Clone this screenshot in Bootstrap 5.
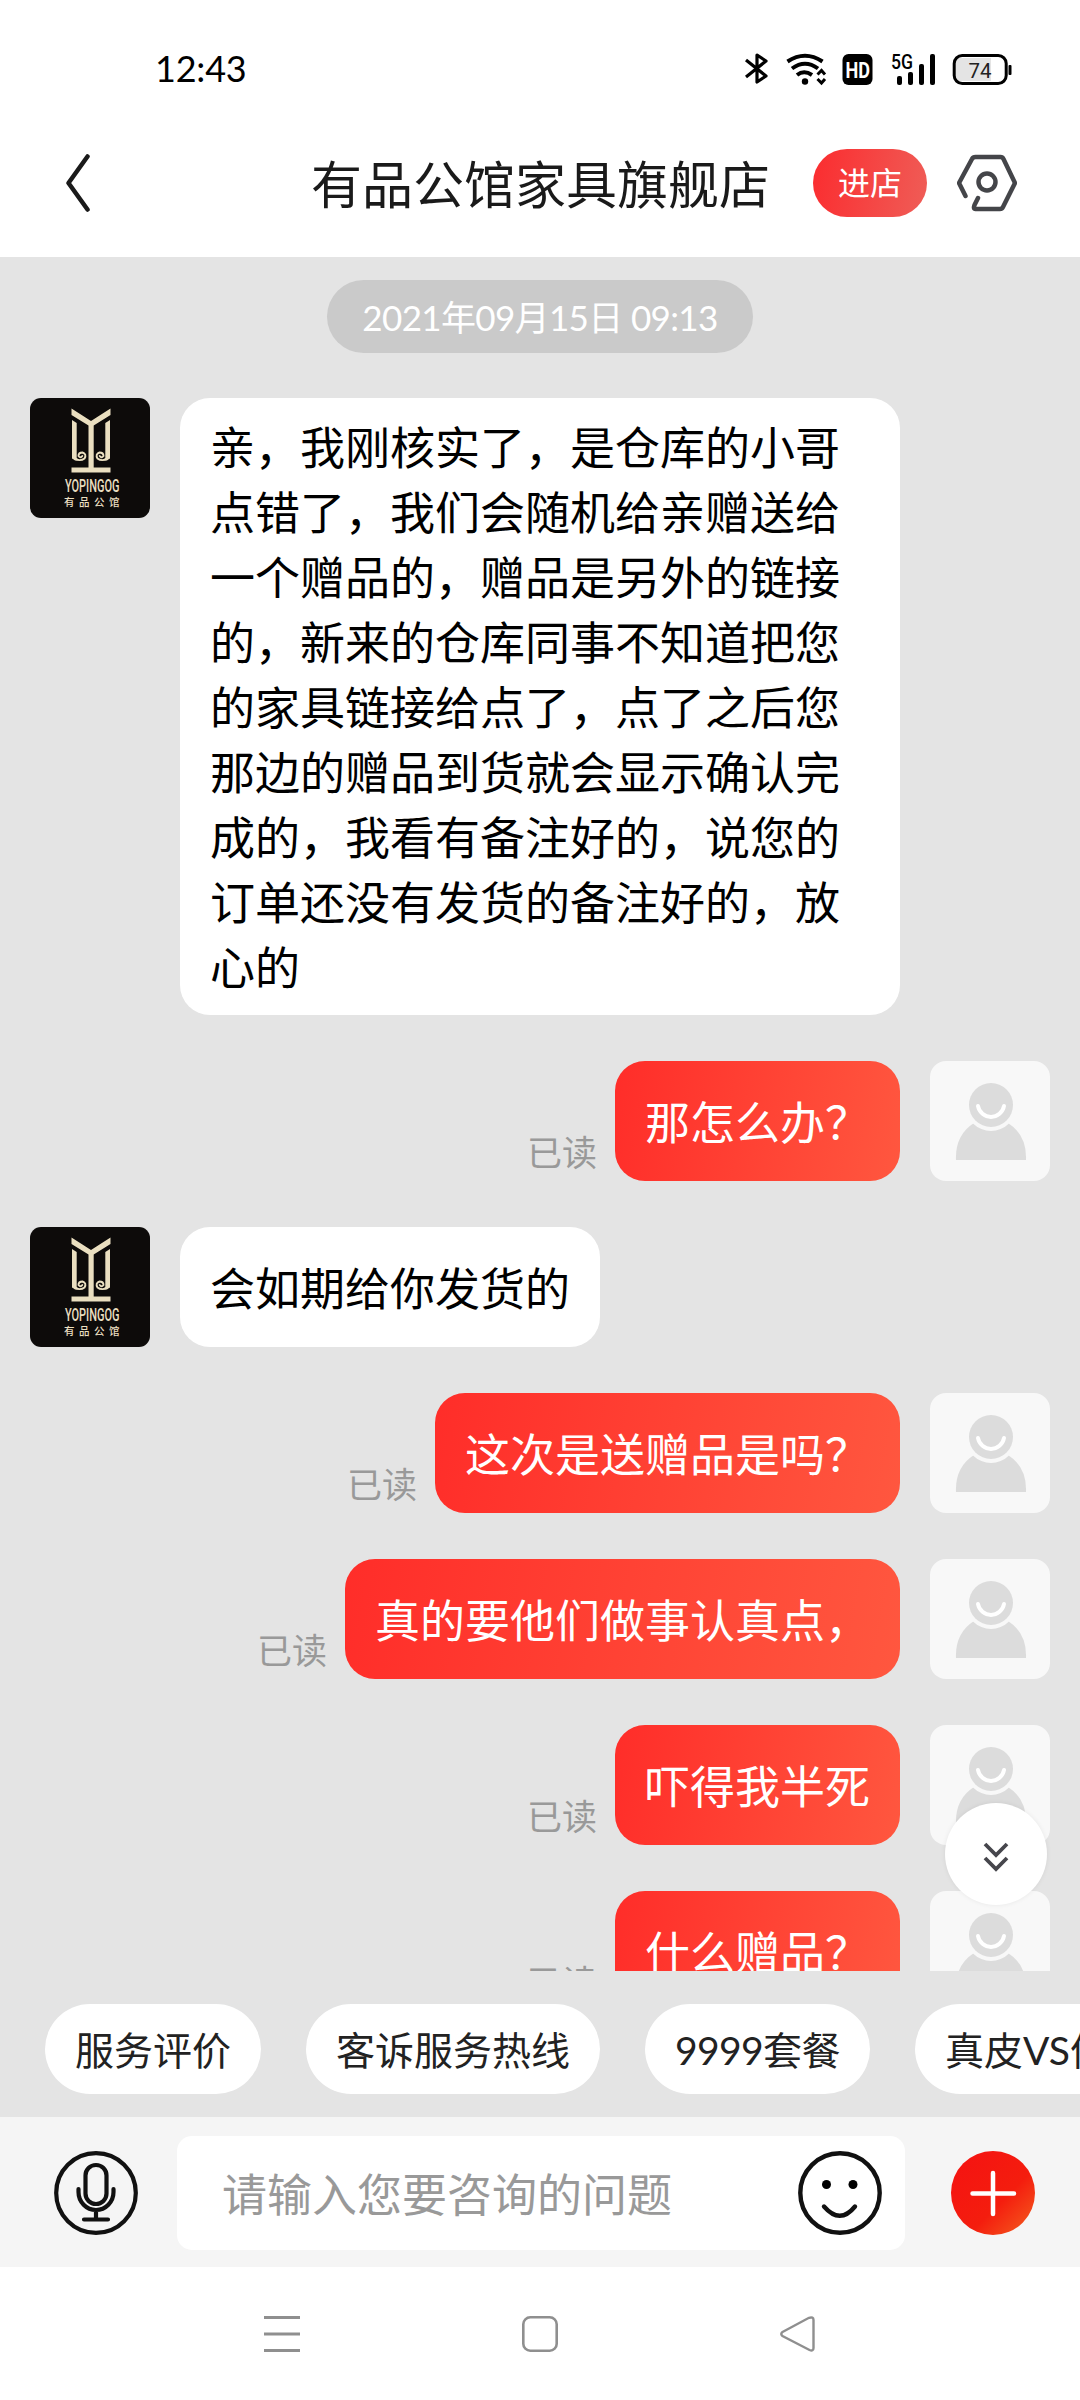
<!DOCTYPE html>
<html lang="zh-CN">
<head>
<meta charset="utf-8">
<meta name="viewport" content="width=device-width, initial-scale=1">
<title>有品公馆家具旗舰店</title>
<link href="https://cdn.jsdelivr.net/npm/bootstrap@5.3.0/dist/css/bootstrap.min.css" rel="stylesheet">
<style>
body{font-family:"Lato","Noto Sans CJK SC",sans-serif;color:#000;text-spacing-trim:space-all}
svg{display:block;flex:none}
.phone{width:1080px;height:2400px;overflow:hidden;background:#fff}
.statusbar{height:137px;padding:0 53px 0 155px}
.clock{font-size:36px;line-height:1;letter-spacing:-.2px;padding-bottom:2px}
.topbar{height:120px;padding:0 63px 28px 66px}
.shop-title{font-size:51px;line-height:68px;color:#1a1a1a;font-weight:400;margin:4px 0 0 219px}
.enter-btn{width:114px;height:68px;padding:0;border:0;margin:0 30px 0 auto;font-size:32px;line-height:68px;color:#fff;background:linear-gradient(100deg,#fb2c2f,#ef5d57)}
.chat{height:1714px;padding:23px 30px 0;background:#e4e4e4;gap:46px}
.date-pill{width:426px;height:73px;margin-bottom:-1px;font-size:35px;line-height:74px;letter-spacing:-.65px;color:#fff;background:#cacaca}
.avatar{width:120px;height:120px;border-radius:11px;overflow:hidden;flex:none}
.avatar-guest{border-radius:16px}
.msg-row{gap:30px}
.bubble{min-height:120px;max-width:720px;padding:18px 30px 14px;border-radius:30px;font-size:45px;line-height:65px}
.bubble-in{background:#fff}
.bubble-out{color:#fff;background:linear-gradient(100deg,#ff2d29,#ff573f)}
.read-flag{font-size:35px;line-height:40px;color:#999;margin:0 -12px 9px 0}
.jump-btn{width:102px;height:102px;right:33px;top:1546px;background:#fff;box-shadow:0 0 5px rgba(0,0,0,.07)}
.quick{height:146px;padding:33px 0 0 45px;gap:45px;background:#e4e4e4}
.chip{height:90px;padding:0 30px;font-size:39px;line-height:92px;color:#222;background:#fff;border-radius:45px;flex:none;white-space:nowrap}
.chip-num{letter-spacing:-.6px}
.inputbar{height:150px;padding:2px 45px 0 54px;background:#f5f5f5}
.ask-box{width:728px;height:114px;padding:0 23px 0 45px;margin:0 46px 0 39px;border-radius:15px;background:#fff}
.ask-hint{font-size:45px;line-height:65px;color:#999;padding-top:4px}
.sysnav{height:133px;padding:49px 264px 0}
</style>
</head>
<body>
<svg width="0" height="0" class="position-absolute" aria-hidden="true">
<defs>
<linearGradient id="plusFill" x1="0" y1="0" x2="1" y2="1"><stop offset="0" stop-color="#f51212"/><stop offset=".6" stop-color="#f41d0e"/><stop offset="1" stop-color="#f4611f"/></linearGradient>
<symbol id="shopLogo" viewBox="0 0 120 120">
<rect width="120" height="120" fill="#0d0b0a"/>
<g fill="#eadfc0">
<path d="M41.500 10.500 61 23 80.500 10.500V17L63.700 27.500V69.500H80.500V74.500H41.500V69.500H58.500V27.500L41.500 17Z"/>
<path d="M42 22 46.700 25V60L50 62.500H45L42 60Z"/><path d="M80 22 75.300 25V60L72 62.500H77L80 60Z"/>
</g>
<g fill="none" stroke="#eadfc0" stroke-width="1.900" stroke-linecap="round">
<path d="M43 60Q50 64 54.500 60.500Q57 56 52.500 54.500Q48.500 54.500 48.500 58Q50.500 60.500 52.300 58"/>
<path d="M79 60Q72 64 67.500 60.500Q65 56 69.500 54.500Q73.500 54.500 73.500 58Q71.500 60.500 69.700 58"/>
</g>
<text x="35" y="93.700" font-family="Roboto" font-size="18" font-weight="500" textLength="54.500" lengthAdjust="spacingAndGlyphs" fill="#eadfc0">YOPINGOG</text>
<text x="34 49 64 79" y="107.500" font-family="Noto Sans CJK SC" font-size="10.500" font-weight="500" fill="#eadfc0">有品公馆</text>
</symbol>
<symbol id="guest" viewBox="0 0 120 120">
<rect width="120" height="120" fill="#f8f8f8"/>
<path d="M26 99Q25 74 44 62H78Q97 74 96 99Z" fill="#dcdcdc"/>
<circle cx="61" cy="45" r="25" fill="#f8f8f8"/>
<circle cx="61" cy="44" r="22" fill="#dcdcdc"/>
<path d="M48 45A13.200 13.200 0 0 0 74 45" fill="none" stroke="#fff" stroke-width="4" stroke-linecap="round"/>
</symbol>
</defs>
</svg>

<div class="phone d-flex flex-column mx-auto">
<header class="statusbar d-flex align-items-center justify-content-between">
<span class="clock">12:43</span>
<svg width="284" height="40" viewBox="0 0 284 40">
<g transform="translate(0,-1)">
<path d="M2 12 22 28 13 34V7L22 13 2 29" fill="none" stroke="#000" stroke-width="3.200" stroke-linejoin="round" transform="translate(1,0)"/>
<g fill="none" stroke="#000" stroke-width="4">
<path d="M44.500 13.500Q62 2 79.500 13.500"/><path d="M49 20.500Q62 11 75 20.500"/><path d="M54 27Q61 21.500 69 27"/>
<path d="M74.500 26.500 78.500 22.500 82 26.500M74.500 31 78.500 35 82 31" stroke-width="3"/>
</g>
<circle cx="62" cy="33.500" r="3.200"/>
<rect x="99.500" y="6" width="30" height="31" rx="6"/>
<text x="102.500" y="30" font-family="Roboto" font-size="22" font-weight="700" fill="#fff" textLength="24.500" lengthAdjust="spacingAndGlyphs">HD</text>
<text x="148" y="21" font-family="Roboto" font-size="20" font-weight="500" textLength="22" lengthAdjust="spacingAndGlyphs">5G</text>
<rect x="154" y="28" width="5" height="9" rx="2"/><rect x="165" y="24" width="5" height="13" rx="2"/><rect x="176" y="16" width="5" height="21" rx="2"/><rect x="187" y="6" width="5" height="31" rx="2"/>
<path d="M216 10H248V33H216Q212 33 212 29V14Q212 10 216 10" fill="#e4e4e4"/>
<rect x="211.200" y="7.500" width="52" height="28" rx="8" fill="none" stroke="#000" stroke-width="3"/>
<rect x="265.500" y="17" width="3" height="10" rx="1"/>
<text x="225.500" y="29.500" font-family="Roboto" font-size="21" fill="#222" textLength="23" lengthAdjust="spacingAndGlyphs">74</text>
</g>
</svg>
</header>

<nav class="topbar d-flex align-items-center">
<svg width="26" height="60" viewBox="0 0 26 60"><path d="M21.500 3.500 2.500 30 21.500 56.500" fill="none" stroke="#1a1a1a" stroke-width="4.500" stroke-linecap="round" stroke-linejoin="round"/></svg>
<h1 class="shop-title text-nowrap">有品公馆家具旗舰店</h1>
<button class="enter-btn btn rounded-pill flex-shrink-0">进店</button>
<svg width="60" height="58" viewBox="0 0 60 58"><path d="M8.500 42 2 29 15 5Q16 3 18.500 3H43.500Q45.500 3 46.500 5L58 29 46 53Q45 55 43 55H18.500Q16 55 17.500 51L21 44" fill="none" stroke="#444549" stroke-width="4.500" stroke-linecap="round" stroke-linejoin="round"/><circle cx="30" cy="28" r="8.500" fill="none" stroke="#444549" stroke-width="4.500"/></svg>
</nav>

<main class="chat position-relative d-flex flex-column overflow-hidden">
<div class="date-pill rounded-pill text-center align-self-center flex-shrink-0">2021年09月15日 09:13</div>

<div class="msg-row d-flex align-items-start flex-shrink-0">
<svg class="avatar"><use href="#shopLogo"/></svg>
<div class="bubble bubble-in">亲，我刚核实了，是仓库的小哥点错了，我们会随机给亲赠送给一个赠品的，赠品是另外的链接的，新来的仓库同事不知道把您的家具链接给点了，点了之后您那边的赠品到货就会显示确认完成的，我看有备注好的，说您的订单还没有发货的备注好的，放心的</div>
</div>

<div class="msg-row d-flex justify-content-end align-items-end flex-shrink-0">
<span class="read-flag">已读</span><div class="bubble bubble-out d-flex align-items-center">那怎么办？</div>
<svg class="avatar avatar-guest"><use href="#guest"/></svg>
</div>

<div class="msg-row d-flex align-items-start flex-shrink-0">
<svg class="avatar"><use href="#shopLogo"/></svg>
<div class="bubble bubble-in d-flex align-items-center">会如期给你发货的</div>
</div>

<div class="msg-row d-flex justify-content-end align-items-end flex-shrink-0">
<span class="read-flag">已读</span><div class="bubble bubble-out d-flex align-items-center">这次是送赠品是吗？</div>
<svg class="avatar avatar-guest"><use href="#guest"/></svg>
</div>

<div class="msg-row d-flex justify-content-end align-items-end flex-shrink-0">
<span class="read-flag">已读</span><div class="bubble bubble-out d-flex align-items-center">真的要他们做事认真点，</div>
<svg class="avatar avatar-guest"><use href="#guest"/></svg>
</div>

<div class="msg-row d-flex justify-content-end align-items-end flex-shrink-0">
<span class="read-flag">已读</span><div class="bubble bubble-out d-flex align-items-center">吓得我半死</div>
<svg class="avatar avatar-guest"><use href="#guest"/></svg>
</div>

<div class="msg-row d-flex justify-content-end align-items-end flex-shrink-0">
<span class="read-flag">已读</span><div class="bubble bubble-out d-flex align-items-center">什么赠品？</div>
<svg class="avatar avatar-guest"><use href="#guest"/></svg>
</div>

<div class="jump-btn position-absolute rounded-circle d-flex align-items-center justify-content-center">
<svg width="30" height="36" viewBox="0 0 30 36"><path d="M4 8 15 19 26 8M4 22 15 33 26 22" fill="none" stroke="#46464c" stroke-width="3.800"/></svg>
</div>
</main>

<section class="quick d-flex align-items-start overflow-hidden">
<div class="chip">服务评价</div><div class="chip">客诉服务热线</div><div class="chip chip-num">9999套餐</div><div class="chip">真皮VS仿皮</div>
</section>

<section class="inputbar d-flex align-items-center">
<svg width="84" height="84" viewBox="0 0 84 84"><g fill="none" stroke="#111" stroke-width="4.200" stroke-linecap="round"><circle cx="42" cy="42" r="39.800"/><rect x="31.500" y="14" width="21" height="39" rx="10.500"/><path d="M24.500 38V41A17.500 18 0 0 0 59.500 41V38M42 59V68M30 68.500H54"/></g></svg>
<div class="ask-box d-flex align-items-center justify-content-between">
<span class="ask-hint">请输入您要咨询的问题</span>
<svg width="84" height="84" viewBox="0 0 84 84"><g fill="none" stroke="#111" stroke-width="4.400" stroke-linecap="round"><circle cx="42" cy="42" r="39.700"/><path d="M26 55.500Q42 74 57 55.500"/></g><circle cx="28.500" cy="33.500" r="4.500"/><circle cx="55" cy="33.500" r="4.500"/></svg>
</div>
<svg width="84" height="84" viewBox="0 0 84 84"><circle cx="42" cy="42" r="42" fill="url(#plusFill)"/><path d="M42 22V63M21.500 42.500H63" stroke="#fff" stroke-width="4.500" stroke-linecap="round"/></svg>
</section>

<footer class="sysnav d-flex align-items-start justify-content-between">
<svg width="36" height="36" viewBox="0 0 36 36"><path d="M0 1.500H36M0 18H36M0 34.500H36" stroke="#8f8f8f" stroke-width="3"/></svg>
<svg width="36" height="36" viewBox="0 0 36 36"><rect x="1.300" y="1.300" width="33.400" height="33.400" rx="7" fill="none" stroke="#8f8f8f" stroke-width="2.600"/></svg>
<svg width="36" height="36" viewBox="0 0 36 36"><path d="M2.500 16 29 1.800Q33.500 .5 33.500 4V32Q33.500 35.500 29.500 34L2.500 20Q0 18 2.500 16Z" fill="none" stroke="#8f8f8f" stroke-width="2.400"/></svg>
</footer>
</div>
<script src="https://cdn.jsdelivr.net/npm/bootstrap@5.3.0/dist/js/bootstrap.bundle.min.js"></script>
</body>
</html>
